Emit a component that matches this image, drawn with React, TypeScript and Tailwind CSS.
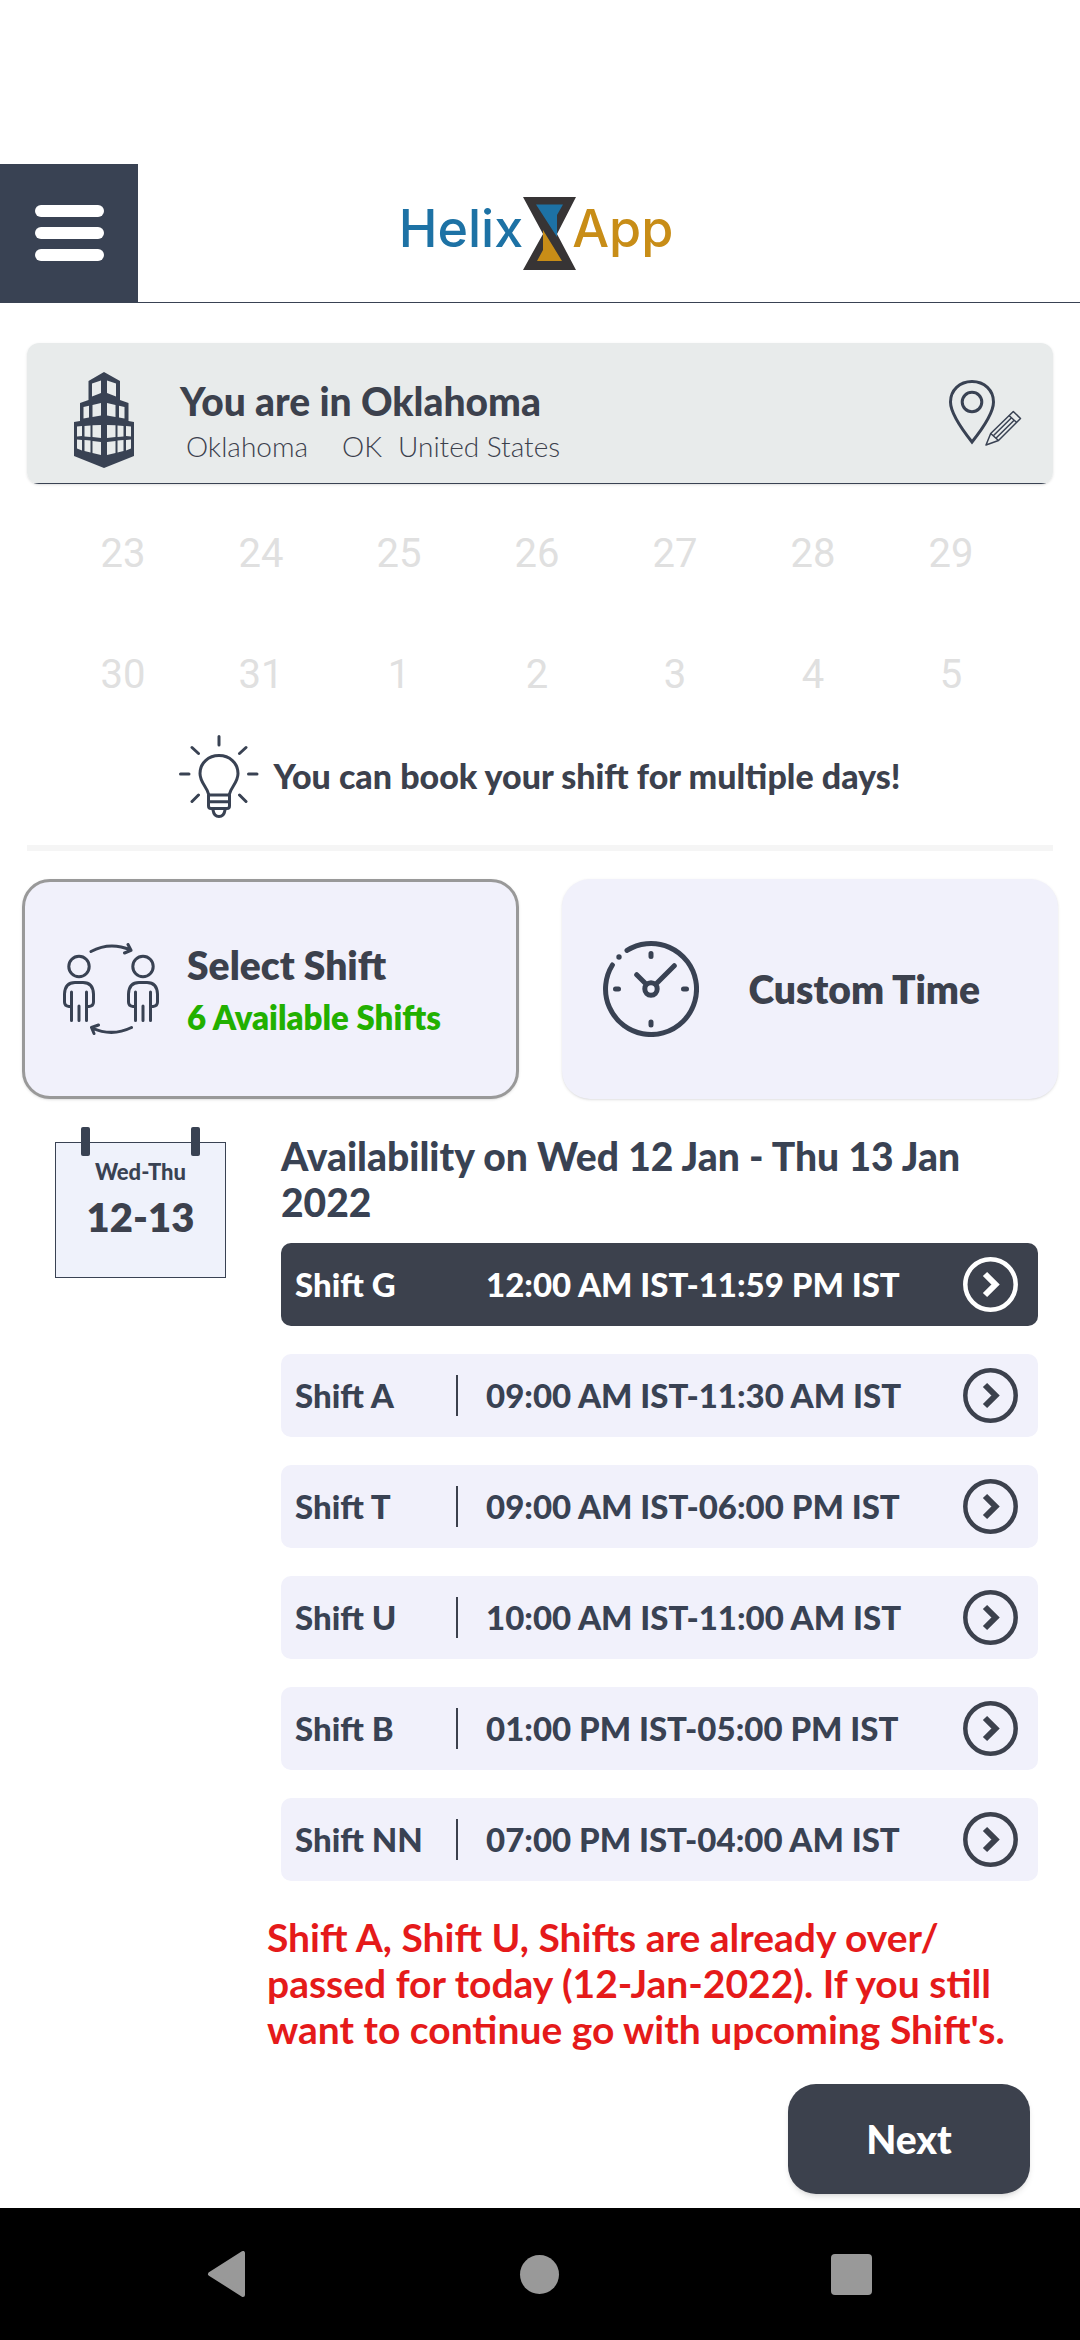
import type { ReactNode } from 'react';

const shifts = [
  { name: 'Shift G', time: '12:00 AM IST-11:59 PM IST', selected: true },
  { name: 'Shift A', time: '09:00 AM IST-11:30 AM IST' },
  { name: 'Shift T', time: '09:00 AM IST-06:00 PM IST' },
  { name: 'Shift U', time: '10:00 AM IST-11:00 AM IST' },
  { name: 'Shift B', time: '01:00 PM IST-05:00 PM IST' },
  { name: 'Shift NN', time: '07:00 PM IST-04:00 AM IST' },
];

const days = [23, 24, 25, 26, 27, 28, 29, 30, 31, 1, 2, 3, 4, 5];

function Hourglass() {
  return (
    <svg width="53" height="73" viewBox="0 0 53 73" className="-mr-1" aria-hidden="true">
      <path d="M0 0H53L34 37L53 73H0L20 37Z" fill="#373435" />
      <path d="M13 7.500H40L34 18V40Z" fill="#1d72a5" />
      <path d="M20 33L39 64H14L20 53Z" fill="#c88d17" />
    </svg>
  );
}

function BuildingHalf() {
  return (
    <g fill="#e8ebeb">
      <path d="M18 11.500L27 8.500V21L18 24.500Z" />
      <path d="M9.500 35L15 33.800V45.500L9.500 46.500Z" />
      <path d="M18.500 33L27 31V43.500L18.500 45Z" />
      <path d="M3 54.500L8 54V64L3 64.500Z" />
      <path d="M10.500 54L16.500 53.500V65L10.500 64.500Z" />
      <path d="M18.500 53.300L27 53V66L18.500 65Z" />
      <path d="M3 67.500L8 68V78.500L3 76.500Z" />
      <path d="M10.500 68L16.500 68.500V80.500L10.500 79Z" />
      <path d="M18.500 69L27 70V83L18.500 81Z" />
    </g>
  );
}

function Building() {
  return (
    <svg width="60" height="96" viewBox="0 0 60 96" aria-hidden="true">
      <path
        d="M30 0L46 9V28L54.500 31V49L60 50V84L30 96L0 84V50L6 49V31L14.500 28V9Z"
        fill="#394253"
      />
      <BuildingHalf />
      <g transform="translate(60 0) scale(-1 1)">
        <BuildingHalf />
      </g>
    </svg>
  );
}

function PinPencil() {
  return (
    <svg width="73" height="67" viewBox="0 0 73 67" fill="none" stroke="#394253" aria-hidden="true">
      <path
        d="M23 1.500C10.500 1.500 1.500 10.500 1.500 22C1.500 34 13.500 50 23 62C32.500 50 44.500 34 44.500 22C44.500 10.500 35.500 1.500 23 1.500Z"
        strokeWidth="3"
      />
      <circle cx="23" cy="22" r="9.800" strokeWidth="3" />
      <g strokeWidth="1.500" strokeLinejoin="round">
        <path d="M37 65L41.700 53.500L64.300 31.500L71.500 38.500L49.500 60.500Z" />
        <path d="M41.700 53.500L49.500 60.500M60 35.500L67.700 42.500" />
        <path d="M44.300 55.800L62.500 37.800M46.900 58.200L65.100 40.200" />
      </g>
    </svg>
  );
}

function Bulb() {
  return (
    <svg
      width="80"
      height="83"
      viewBox="0 0 80 83"
      fill="none"
      stroke="#394253"
      strokeWidth="3"
      strokeLinecap="round"
      aria-hidden="true"
    >
      <path d="M40 1.500V10M1.500 39H10M69.500 39H78M13 12.500L19.500 18.500M67 12.500L60.500 18.500M13 66.500L19.500 60M67 66.500L60.500 60" />
      <path d="M29.500 59C28 52 21 47.500 21 38.500C21 28 29.500 20.500 40 20.500C50.500 20.500 59 28 59 38.500C59 47.500 52 52 50.500 59" />
      <path d="M29.500 60H50.500M29.500 60V71Q29.500 73.500 32 73.500H48Q50.500 73.500 50.500 71V60M29.500 66.800H50.500" />
      <path d="M34 75Q35 81.500 40 81.500Q45 81.500 46 75" />
    </svg>
  );
}

function Person() {
  return (
    <>
      <circle cx="16" cy="23.500" r="10.200" />
      <path d="M8.500 63.500H6Q1.500 63 1.500 59V51Q2 39.500 12 39.500H20Q30 39.500 30.500 51V59Q30.500 63 26 63.500H23.500" />
      <path d="M8.500 49V77.500M23.500 49V77.500M16 63V77.500" />
    </>
  );
}

function People() {
  return (
    <svg
      width="96"
      height="92"
      viewBox="0 0 96 92"
      fill="none"
      stroke="#394253"
      strokeWidth="3"
      strokeLinecap="round"
      strokeLinejoin="round"
      aria-hidden="true"
    >
      <Person />
      <g transform="translate(64 0)">
        <Person />
      </g>
      <path d="M28 8.500Q47 -1.500 67.500 7M65 1.500L68 7.300L61.500 10" />
      <path d="M68.500 84.500Q49 94 29 85M35.500 82L28.500 84.500L31 90.500" />
    </svg>
  );
}

function Clock() {
  return (
    <svg
      width="96"
      height="96"
      viewBox="0 0 96 96"
      fill="none"
      stroke="#394253"
      strokeWidth="5"
      strokeLinecap="round"
      aria-hidden="true"
    >
      <path d="M24 9.400A45.500 45.500 0 1 1 9.400 24" />
      <circle cx="16" cy="16" r="2.700" fill="#394253" stroke="none" />
      <path d="M48 12.500V15.500M48 81V84M12.500 48H15.500M80.500 48H83.500M71.300 24.700L54 42M33.700 33.700L42.500 42.500" />
      <circle cx="48" cy="48" r="6.200" />
    </svg>
  );
}

function ChevronCircle() {
  return (
    <svg
      width="55"
      height="55"
      viewBox="0 0 55 55"
      fill="none"
      stroke="currentColor"
      className="shrink-0"
      aria-hidden="true"
    >
      <circle cx="27.500" cy="27.500" r="25.200" strokeWidth="4.500" />
      <path d="M22 17L32.500 27.500L22 38" strokeWidth="6" />
    </svg>
  );
}

function NavButton({ label, children }: { label: string; children: ReactNode }) {
  return (
    <button type="button" aria-label={label} className="flex h-12 w-12 items-center justify-center">
      {children}
    </button>
  );
}

export default function App() {
  return (
    <div className="flex min-h-screen flex-col bg-white pt-[164px] font-['Lato',sans-serif] text-[#3c414d]">
      <header className="grid grid-cols-[138px_1fr_138px] items-center border-b border-[#394253]">
        <button
          type="button"
          aria-label="Menu"
          className="flex h-[138px] flex-col items-center justify-center gap-[10px] bg-[#394253]"
        >
          <span className="h-3 w-[69px] rounded-full bg-white" />
          <span className="h-3 w-[69px] rounded-full bg-white" />
          <span className="h-3 w-[69px] rounded-full bg-white" />
        </button>
        <h1 className="flex items-center justify-center pr-2 font-['Inter',sans-serif] text-[52px] leading-[64px] font-medium">
          <span className="pb-2 text-[#1d72a5]">Helix</span>
          <Hourglass />
          <span className="pb-2 text-[#c88d17]">App</span>
        </h1>
      </header>

      <main className="grow">
        <section className="mx-[27px] mt-10 overflow-hidden rounded-xl shadow-sm">
          <div className="flex h-[141px] items-start border-b border-[#394253] bg-[#e8ebeb] pt-[29px] pr-[31px] pl-[47px]">
            <Building />
            <div className="mt-[6px] ml-[46px] grow">
              <h2 className="text-[39px] leading-[46px] font-black">You are in Oklahoma</h2>
              <p className="mt-1 flex pl-[6px] text-[28px] leading-9 font-light">
                <span>Oklahoma</span>
                <span className="ml-[34px]">OK</span>
                <span className="ml-4">United States</span>
              </p>
            </div>
            <button type="button" aria-label="Change location" className="mt-2">
              <PinPencil />
            </button>
          </div>
        </section>

        <div className="mt-[10px] mr-[60px] ml-[54px] grid grid-cols-7 gap-y-px font-['Roboto',sans-serif] text-[40px] text-[#e0e0e0]">
          {days.map((day, i) => (
            <button key={i} type="button" disabled className="h-[120px]">
              {day}
            </button>
          ))}
        </div>

        <div className="mx-[27px] flex h-[116px] items-start justify-center gap-[14px] border-b-[6px] border-[#f5f5f5]">
          <Bulb />
          <p className="text-[34px] leading-[82px] font-black">
            You can book your shift for multiple days!
          </p>
        </div>

        <div className="mt-7 grid grid-cols-2 gap-[43px] px-[22px]">
          <button
            type="button"
            className="flex h-[220px] items-center rounded-[28px] border-3 border-[#999999] bg-[#f1f1fb] pl-[38px] text-left shadow-sm"
          >
            <People />
            <span className="ml-7 flex flex-col pt-1">
              <span className="text-[39px] leading-[52px] font-extrabold">Select Shift</span>
              <span className="text-[33px] leading-[52px] font-extrabold text-[#22b000]">
                6 Available Shifts
              </span>
            </span>
          </button>
          <button
            type="button"
            className="flex h-[220px] items-center rounded-[28px] bg-[#f1f1fb] pl-[41px] text-left shadow-sm"
          >
            <Clock />
            <span className="ml-[50px] text-[39px] font-extrabold">Custom Time</span>
          </button>
        </div>

        <section className="mt-7 flex items-start pr-[42px] pl-[55px]">
          <div className="relative mt-[15px] flex h-[136px] w-[171px] shrink-0 flex-col items-center border border-[#394253] bg-[#eff2fb] pt-[15px]">
            <span className="absolute -top-4 left-[25px] h-[29px] w-[9px] rounded-xs bg-[#394253]" />
            <span className="absolute -top-4 right-[25px] h-[29px] w-[9px] rounded-xs bg-[#394253]" />
            <span className="text-[22px] leading-7 font-black text-[#394253]">Wed-Thu</span>
            <span className="mt-2 text-[40px] leading-[46px] font-extrabold">12-13</span>
          </div>
          <div className="mt-[6px] ml-[55px] grow text-[#394253]">
            <h2 className="text-[39px] leading-[46px] font-black">
              Availability on Wed 12 Jan - Thu 13 Jan 2022
            </h2>
            <ul className="mt-[18px] flex flex-col gap-7">
              {shifts.map((shift) => (
                <li key={shift.name}>
                  <button
                    type="button"
                    className={
                      shift.selected
                        ? 'flex h-[83px] w-full items-center rounded-[10px] bg-[#3c414d] pr-5 pl-[14px] text-left text-white'
                        : 'flex h-[83px] w-full items-center rounded-[10px] bg-[#f1f1fb] pr-5 pl-[14px] text-left'
                    }
                  >
                    <span className="w-[161px] text-[33px] font-black">{shift.name}</span>
                    <span
                      className={shift.selected ? 'h-[41px] w-[2px]' : 'h-[41px] w-[2px] bg-[#3c414d]'}
                    />
                    <span className="ml-7 grow text-[33px] font-black">{shift.time}</span>
                    <span className={shift.selected ? 'text-white' : 'text-[#3c414d]'}>
                      <ChevronCircle />
                    </span>
                  </button>
                </li>
              ))}
            </ul>
          </div>
        </section>

        <p className="mt-[33px] mr-12 ml-[267px] text-[39px] leading-[46px] font-bold text-[#e51a1a]">
          Shift A, Shift U, Shifts are already over/
          <br />
          passed for today (12-Jan-2022). If you still want to continue go with upcoming Shift&apos;s.
        </p>

        <div className="mt-8 mr-[50px] mb-[14px] flex justify-end">
          <button
            type="button"
            className="h-[110px] w-[242px] rounded-[28px] bg-[#3c414d] text-[39px] font-black text-white shadow-md"
          >
            Next
          </button>
        </div>
      </main>

      <nav className="flex h-[132px] items-center justify-between bg-black pr-[205px] pl-[203px]">
        <NavButton label="Back">
          <svg width="40" height="46" viewBox="0 0 40 46" aria-hidden="true">
            <path d="M36 2V44L3 23Z" fill="#999999" stroke="#999999" strokeWidth="4" strokeLinejoin="round" />
          </svg>
        </NavButton>
        <NavButton label="Home">
          <span className="h-[39px] w-[39px] rounded-full bg-[#999999]" />
        </NavButton>
        <NavButton label="Recent apps">
          <span className="h-[41px] w-[41px] rounded bg-[#999999]" />
        </NavButton>
      </nav>
    </div>
  );
}
